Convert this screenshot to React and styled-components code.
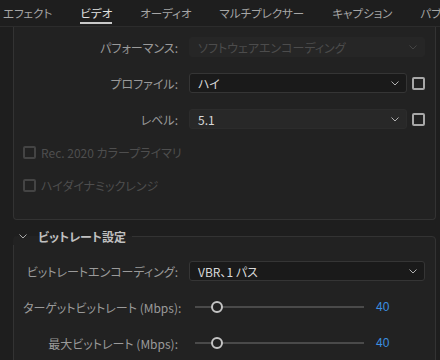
import React from 'react';
import styled, { createGlobalStyle } from 'styled-components';

const GlobalStyle = createGlobalStyle`
  html, body {
    margin: 0;
    padding: 0;
    background: #1e1e1e;
    overflow: hidden;
  }
  body {
    font-family: "Noto Sans CJK JP", "Noto Sans", sans-serif;
    font-feature-settings: "palt";
    font-size: 12px;
    color: #a0a0a0;
  }
`;

const Screen = styled.div`
  width: 440px;
  height: 360px;
  overflow: hidden;
  display: flex;
  flex-direction: column;
`;

const TabBar = styled.div`
  display: flex;
  gap: 28px;
  height: 26px;
  padding-left: 3px;
  border-bottom: 1px solid #2c2c2c;
  white-space: nowrap;
  overflow: hidden;
  flex-shrink: 0;
`;

const Tab = styled.div`
  position: relative;
  line-height: 27px;
  font-size: 11.5px;
  color: ${p => (p.$active ? '#e2e2e2' : '#a6a6a6')};
  &::after {
    content: '';
    display: ${p => (p.$active ? 'block' : 'none')};
    position: absolute;
    left: 0;
    right: 0;
    bottom: 2px;
    height: 2px;
    background: #c8c8c8;
  }
`;

const Body = styled.div`
  padding: 0 4px 0 13px;
`;

const Panel = styled.div`
  background: #222;
  border: 1px solid #333;
  border-top: none;
  border-radius: 0 0 4px 4px;
  padding: 10px 10px 24px 9px;
  display: flex;
  flex-direction: column;
`;

const Row = styled.div`
  display: flex;
  align-items: center;
  height: 20px;
  margin-top: ${p => p.$gap || 0}px;
`;

const Label = styled.div`
  width: 155px;
  flex-shrink: 0;
  text-align: right;
  padding-right: 11px;
  color: #9a9a9a;
  white-space: nowrap;
`;

const Select = styled.div`
  flex: 1;
  height: 20px;
  box-sizing: border-box;
  display: flex;
  align-items: center;
  justify-content: space-between;
  padding: 0 7px 0 8px;
  border-radius: 3px;
  border: 1px solid ${p => (p.$tone === 'disabled' ? '#262626' : p.$tone === 'dark' ? '#353535' : '#2c2c2c')};
  background: ${p => (p.$tone === 'disabled' ? '#262626' : p.$tone === 'dark' ? '#1a1a1a' : '#282828')};
  color: ${p => (p.$tone === 'disabled' ? '#4c4c4c' : '#d8d8d8')};
  font-size: 12px;
`;

const Box = styled.div`
  width: 13px;
  height: 13px;
  box-sizing: border-box;
  border: 2px solid ${p => (p.$disabled ? '#444' : '#a8a8a8')};
  border-radius: 2px;
  flex-shrink: 0;
  margin-left: ${p => p.$ml || 0}px;
`;

const CheckText = styled.span`
  margin-left: 5px;
  color: #4e4e4e;
`;

const Section = styled.fieldset`
  margin: 8px 0 0;
  padding: 16px 10px 20px 9px;
  border: 1px solid #333;
  border-radius: 4px;
  background: #222;
  min-width: 0;
`;

const Legend = styled.legend`
  display: flex;
  align-items: center;
  gap: 11px;
  padding: 0 6px 0 6px;
  margin-left: -10px;
  color: #c0c0c0;
  font-weight: 700;
  font-size: 12px;
`;

const Slider = styled.div`
  flex: 1;
  display: flex;
  align-items: center;
  padding-left: 6px;
`;

const Track = styled.div`
  position: relative;
  width: 169px;
  height: 2px;
  background: #4a4a4a;
`;

const Thumb = styled.div`
  position: absolute;
  top: -5px;
  left: ${p => p.$pos}px;
  width: 12px;
  height: 12px;
  box-sizing: border-box;
  border-radius: 50%;
  border: 2px solid #c4c4c4;
  background: #222;
`;

const Value = styled.span`
  margin-left: 12px;
  color: #3b8fe0;
  font-family: "Liberation Sans", Arial, sans-serif;
  font-size: 12px;
`;

const Chevron = ({ color = '#aaa' }) => (
  <svg width="8" height="5" viewBox="0 0 8 5">
    <path d="M0.5 0.5 L4 4 L7.5 0.5" fill="none" stroke={color} strokeWidth="1" />
  </svg>
);

const Dropdown = ({ value, tone }) => (
  <Select $tone={tone}>
    <span>{value}</span>
    <Chevron color={tone === 'disabled' ? '#444' : '#b0b0b0'} />
  </Select>
);

const SliderRow = ({ label, value, pos }) => (
  <Row $gap={16}>
    <Label>{label}</Label>
    <Slider>
      <Track>
        <Thumb $pos={pos} />
      </Track>
      <Value>{value}</Value>
    </Slider>
  </Row>
);

const tabs = ['エフェクト', 'ビデオ', 'オーディオ', 'マルチプレクサー', 'キャプション', 'パブ'];

export default function App() {
  return (
    <Screen>
      <GlobalStyle />
      <TabBar>
        {tabs.map(t => (
          <Tab key={t} $active={t === 'ビデオ'}>{t}</Tab>
        ))}
      </TabBar>
      <Body>
        <Panel>
          <Row>
            <Label>パフォーマンス:</Label>
            <Dropdown value="ソフトウェアエンコーディング" tone="disabled" />
          </Row>
          <Row $gap={16}>
            <Label>プロファイル:</Label>
            <Dropdown value="ハイ" tone="dark" />
            <Box $ml={5} />
          </Row>
          <Row $gap={16}>
            <Label>レベル:</Label>
            <Dropdown value="5.1" />
            <Box $ml={5} />
          </Row>
          <Row $gap={13}>
            <Box $disabled />
            <CheckText>Rec. 2020 カラープライマリ</CheckText>
          </Row>
          <Row $gap={13}>
            <Box $disabled />
            <CheckText>ハイダイナミックレンジ</CheckText>
          </Row>
        </Panel>
        <Section>
          <Legend>
            <Chevron />
            ビットレート設定
          </Legend>
          <Row>
            <Label>ビットレートエンコーディング:</Label>
            <Dropdown value="VBR、1 パス" tone="dark" />
          </Row>
          <SliderRow label="ターゲットビットレート (Mbps):" value="40" pos={16} />
          <SliderRow label="最大ビットレート (Mbps):" value="40" pos={16} />
        </Section>
      </Body>
    </Screen>
  );
}
